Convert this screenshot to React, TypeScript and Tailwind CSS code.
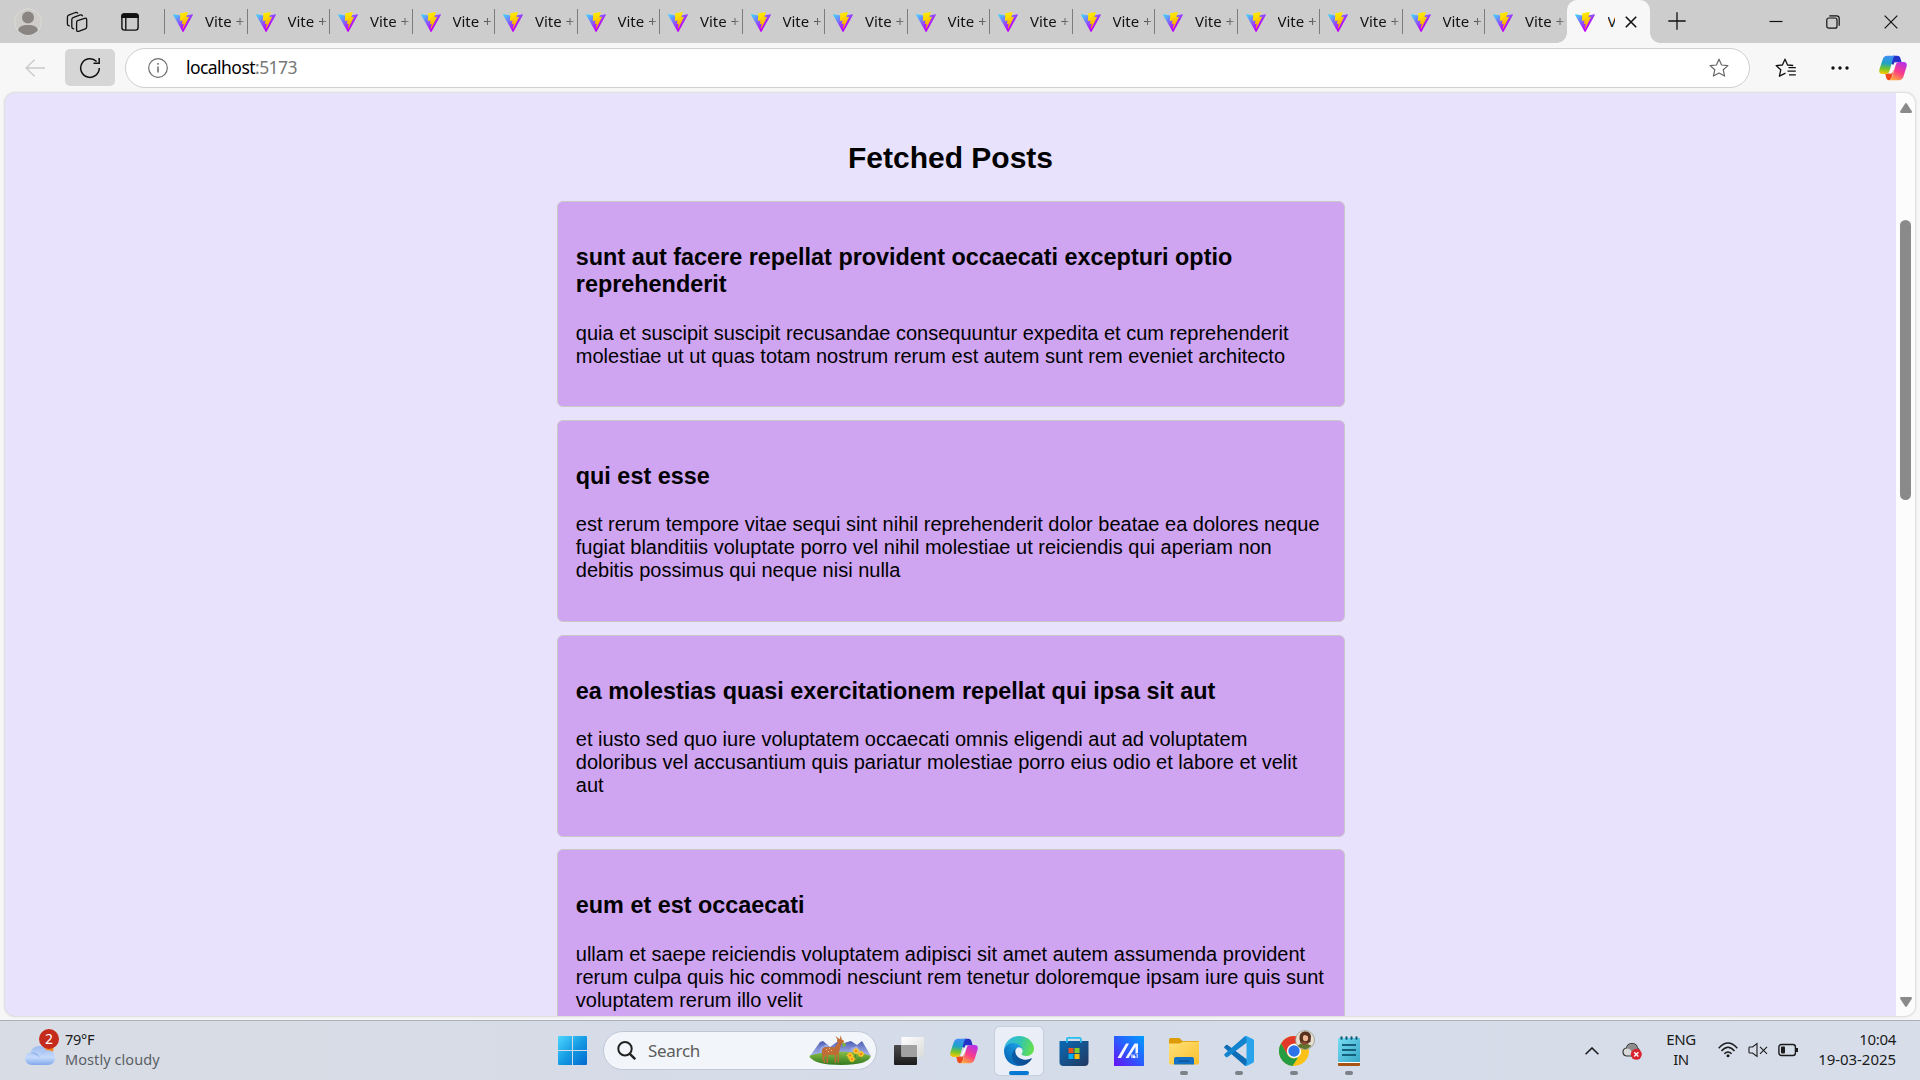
import React from "react";

const posts = [
  {
    title: "sunt aut facere repellat provident occaecati excepturi optio reprehenderit",
    body: "quia et suscipit suscipit recusandae consequuntur expedita et cum reprehenderit molestiae ut ut quas totam nostrum rerum est autem sunt rem eveniet architecto",
  },
  {
    title: "qui est esse",
    body: "est rerum tempore vitae sequi sint nihil reprehenderit dolor beatae ea dolores neque fugiat blanditiis voluptate porro vel nihil molestiae ut reiciendis qui aperiam non debitis possimus qui neque nisi nulla",
  },
  {
    title: "ea molestias quasi exercitationem repellat qui ipsa sit aut",
    body: "et iusto sed quo iure voluptatem occaecati omnis eligendi aut ad voluptatem doloribus vel accusantium quis pariatur molestiae porro eius odio et labore et velit aut",
  },
  {
    title: "eum et est occaecati",
    body: "ullam et saepe reiciendis voluptatem adipisci sit amet autem assumenda provident rerum culpa quis hic commodi nesciunt rem tenetur doloremque ipsam iure quis sunt voluptatem rerum illo velit",
  },
];

function SharedGradients() {
  return (
    <svg className="absolute size-0" aria-hidden="true">
      <defs>
        <linearGradient id="viteA" x1="0" y1="0.1" x2="0.6" y2="0.75">
          <stop offset="0" stopColor="#41d1ff" />
          <stop offset="1" stopColor="#bd00fe" />
        </linearGradient>
        <linearGradient id="viteB" x1="0.4" y1="0" x2="0.6" y2="0.9">
          <stop offset="0" stopColor="#ffea00" />
          <stop offset="0.3" stopColor="#ffdd00" />
          <stop offset="1" stopColor="#f5a300" />
        </linearGradient>
        <linearGradient id="copA" x1="0.3" y1="0" x2="0.2" y2="1">
          <stop offset="0" stopColor="#3f8ff5" />
          <stop offset="0.4" stopColor="#1fa3c4" />
          <stop offset="0.7" stopColor="#74c52c" />
          <stop offset="1" stopColor="#ffc800" />
        </linearGradient>
        <linearGradient id="copB" x1="0.8" y1="0" x2="0.3" y2="1">
          <stop offset="0" stopColor="#b431ec" />
          <stop offset="0.55" stopColor="#fb3c88" />
          <stop offset="1" stopColor="#ffa83c" />
        </linearGradient>
      </defs>
    </svg>
  );
}

function ViteLogo() {
  return (
    <svg viewBox="0 0 256 257" className="size-5 shrink-0">
      <path fill="url(#viteA)" d="M255.153 37.938L134.897 252.976c-2.483 4.44-8.862 4.466-11.382.048L.875 37.958c-2.746-4.814 1.371-10.646 6.827-9.67l120.385 21.517a6.537 6.537 0 0 0 2.322-.004l117.867-21.483c5.438-.991 9.574 4.796 6.877 9.62Z" />
      <path fill="url(#viteB)" d="M185.432.063L96.44 17.501a3.268 3.268 0 0 0-2.634 3.014l-5.474 92.456a3.268 3.268 0 0 0 3.997 3.378l24.777-5.718c2.318-.535 4.413 1.507 3.936 3.838l-7.361 36.047c-.495 2.426 1.782 4.5 4.151 3.78l15.304-4.649c2.372-.72 4.652 1.36 4.15 3.788l-11.698 56.621c-.732 3.542 3.979 5.473 5.943 2.437l1.313-2.028l72.516-144.72c1.215-2.423-.88-5.186-3.54-4.672l-25.505 4.922c-2.396.462-4.435-1.77-3.759-4.114l16.646-57.705c.677-2.35-1.37-4.583-3.769-4.113Z" />
    </svg>
  );
}

function Copilot() {
  return (
    <svg viewBox="0 0 28 26" className="h-[26px] w-7">
      <path fill="#2432c8" d="M14 .8h4.4c1.7 0 2.6.9 3.1 2.6l1.1 3.8h-4.2c-2 0-3 1-3.5 2.7l-3-1.2z" />
      <path fill="#f04a1c" d="M6.2 18.5h5.6l3-3.5-2.2 7.7c-.5 1.6-1.4 2.5-2.8 2.5-1.3 0-2-.8-2.5-2.2z" />
      <path fill="url(#copA)" d="M8.2.8h8.6c-1.6.3-2.3 1.4-2.8 3l-3.4 11.7c-.7 2.2-1.7 3.4-4 3.4H3.2c-2.5 0-3.5-1.8-2.8-4.4L3.7 4.2C4.4 2 5.9.8 8.2.8z" />
      <path fill="url(#copB)" d="M19.8 25.2H9.6c1.8 0 2.8-1 3.4-2.8l3.6-12.2c.6-2 1.7-3.2 4-3.2h4c2.7 0 3.8 1.8 3 4.5l-3.2 10.3c-.8 2.3-2.3 3.4-4.6 3.4z" />
      <path fill="#fff" opacity=".85" d="M15.5 7.3h2.2c-1 .6-1.4 1.4-1.8 2.7l-2.7 8.600h-2.4z" />
    </svg>
  );
}

function TabBar() {
  return (
    <div className="flex h-[43px] shrink-0 bg-[#cdcdcd] text-[#111]">
      <div className="flex w-[164px] shrink-0 items-center">
        <svg viewBox="0 0 28 28" className="ml-3.5 size-7">
          <circle cx="14" cy="14" r="13.2" fill="#cfcdca" stroke="#dedad5" />
          <circle cx="14" cy="9.6" r="6" fill="#8a8583" />
          <path fill="#8a8583" d="M4 22.300C5 18.500 8 17 14 17s9 1.500 10 5.300A13 13 0 0 1 14 27 13 13 0 0 1 4 22.300z" />
        </svg>
        <svg viewBox="0 0 22 22" className="ml-6 size-[22px]" fill="none" stroke="#111" strokeWidth="1.3" strokeLinejoin="round" strokeLinecap="round">
          <path d="M11.500 9.600l7.200-2.300q2-.5 2 1.400v7.100q0 1.500-1.400 2l-6.700 2.500q-2 .6-2-1.400v-7.200q0-1.600.9-2.100z" />
          <path d="M7.700 17.800q-1.900-.1-1.900-1.800V8.700q0-1.600 1.300-2.100l7.200-2.700q1.500-.4 2.100.9" />
          <path d="M3.300 14.900q-1.900-.2-1.900-1.900V6.100q0-1.500 1.300-2l6.700-2.600q1.500-.4 2.300.6" />
        </svg>
        <svg viewBox="0 0 20 20" className="ml-8 size-5" fill="none" stroke="#111" strokeWidth="1.400">
          <rect x="1.900" y="1.900" width="16.200" height="16.200" rx="2.600" />
          <path d="M5.800 6v12" />
          <path fill="#111" stroke="none" d="M1.200 6V4.200a3 3 0 0 1 3-3h11.600a3 3 0 0 1 3 3V6z" />
        </svg>
      </div>
      {Array.from({ length: 17 }, (_, i) => (
        <div key={i} className="flex w-[82.5px] shrink-0 items-center">
          <div className="h-[25px] w-px shrink-0 bg-[#7c7c7c]" />
          <div className="ml-2 flex"><ViteLogo /></div>
          <span className="-mt-0.5 ml-3 w-10 shrink-0 whitespace-nowrap bg-gradient-to-r from-[#111] from-60% to-[#999] bg-clip-text text-[15px] leading-5 text-transparent">Vite +</span>
        </div>
      ))}
      <div className="relative flex w-[83px] shrink-0 items-center rounded-t-[10px] bg-[#f7f7f7]">
        <div className="absolute -left-2.5 bottom-0 size-2.5 bg-[radial-gradient(circle_at_0_0,#cdcdcd_9.5px,#f7f7f7_10px)]" />
        <div className="absolute -right-2.5 bottom-0 size-2.5 bg-[radial-gradient(circle_at_100%_0,#cdcdcd_9.5px,#f7f7f7_10px)]" />
        <div className="ml-2 flex"><ViteLogo /></div>
        <span className="-mt-0.5 ml-[13px] w-[7px] overflow-hidden text-[15px] leading-5">V</span>
        <svg viewBox="0 0 12 12" className="ml-2.5 size-3" stroke="#111" strokeWidth="1.600"><path d="M.8.8l10.400 10.400M11.200.8L.8 11.200" /></svg>
      </div>
      <svg viewBox="0 0 18 18" className="ml-[18px] mt-3 size-[18px]" stroke="#111" strokeWidth="1.300"><path d="M9 .3v17.400M.3 9h17.400" /></svg>
      <div className="ml-auto flex items-center pr-[22px]">
        <svg viewBox="0 0 14 14" className="mr-[43px] size-3.5" stroke="#111" strokeWidth="1.200"><path d="M.5 6.500h13" /></svg>
        <svg viewBox="0 0 14 14" className="mr-11 size-3.5" fill="none" stroke="#111" strokeWidth="1.200">
          <rect x=".8" y="3" width="10.200" height="10.200" rx="2" />
          <path d="M3.300.8h7.300c1.500 0 2.600 1.100 2.600 2.600v7.300" />
        </svg>
        <svg viewBox="0 0 14 14" className="size-3.5" stroke="#111" strokeWidth="1.200"><path d="M.7.7l12.600 12.600M13.300.7L.7 13.300" /></svg>
      </div>
    </div>
  );
}

const star = "M10 1.200l2.600 5.800 6.300.6-4.700 4.200 1.400 6.300L10 15l-5.600 3.100 1.400-6.300L1.100 7.600l6.300-.6z";

function Toolbar() {
  return (
    <div className="flex h-[49px] shrink-0 items-center">
      <svg viewBox="0 0 20 18" className="ml-[25px] h-[18px] w-5" fill="none" stroke="#c9c9c9" strokeWidth="1.300"><path d="M20 9H1M9.600.8L1 9l8.600 8.200" /></svg>
      <div className="ml-5 flex h-[37px] w-[50px] items-center justify-center rounded-[5px] bg-[#d6d6d6]">
        <svg viewBox="0 0 22 22" className="size-[22px]" fill="none" stroke="#111" strokeWidth="1.500"><path d="M20.300 11A9.300 9.300 0 1 1 17.600 4.500M20.200 1v5.300h-5.700" /></svg>
      </div>
      <div className="ml-2.5 flex h-10 w-[1625px] items-center rounded-full border border-[#cfcfcf] bg-white pl-[22px] pr-5">
        <svg viewBox="0 0 20 20" className="size-5" fill="none" stroke="#6b6b6b" strokeWidth="1.200">
          <circle cx="10" cy="10" r="9.300" />
          <path d="M10 8.500v6M10 5v1.700" strokeWidth="1.500" />
        </svg>
        <span className="-mt-px ml-[18px] text-[17.500px] leading-6 tracking-[-0.55px] text-black">localhost<span className="text-[#777]">:5173</span></span>
        <svg viewBox="0 0 20 20" className="ml-auto size-5" fill="none" stroke="#666" strokeWidth="1.200" strokeLinejoin="round"><path d={star} /></svg>
      </div>
      <svg viewBox="0 0 22 20" className="ml-[25px] h-5 w-[22px]" fill="none" stroke="#111" strokeWidth="1.300" strokeLinejoin="round">
        <path d="M10.500 15.200l-6.100 3 1.400-6.400L1.100 7.600l6.300-.6L10 1.200l2.600 5.800 5.600.5M13.500 9.600h7.300M12.500 13.200h8.300M14 16.800h6.800" />
      </svg>
      <svg viewBox="0 0 18 4" className="ml-[34px] h-1 w-[18px]" fill="#111"><circle cx="2" cy="2" r="1.700" /><circle cx="9" cy="2" r="1.700" /><circle cx="16" cy="2" r="1.700" /></svg>
      <div className="ml-[30px]"><Copilot /></div>
    </div>
  );
}

function Page() {
  return (
    <div className="mx-[5px] mt-px flex h-[923px] shrink-0 overflow-hidden rounded-[10px] bg-[#e8e2fd] shadow-[0_0_2px_1px_rgba(0,0,0,0.12)]">
      <main className="flex flex-1 flex-col items-center font-['Liberation_Sans',Arial,sans-serif] text-black">
        <h1 className="mt-[47px] text-[30px] font-bold leading-[35px]">Fetched Posts</h1>
        <div className="mt-[26px] flex w-[788px] flex-col gap-[12.500px]">
          {posts.map((p) => (
            <article key={p.title} className="rounded-[6px] border border-[#c8c8c8] bg-[#cfa5f2] px-[18.300px] py-[18.750px]">
              <h3 className="my-[23.400px] text-[23.400px] font-bold leading-[27px]">{p.title}</h3>
              <p className="mb-5 text-[20px] leading-[23px]">{p.body}</p>
            </article>
          ))}
        </div>
      </main>
      <div className="flex w-[19px] flex-col items-center bg-[#fcfcfc]">
        <svg viewBox="0 0 12 10" className="mt-2.5 h-2.5 w-3 shrink-0" fill="#8a8a8a"><path d="M5 .7Q6-.5 7 .7l4.700 7.300q.8 2-1 2H1.300q-1.800 0-1-2z" /></svg>
        <div className="mt-[107px] h-[280px] w-[11px] shrink-0 rounded-full bg-[#8a8a8a]" />
        <svg viewBox="0 0 12 10" className="mb-[9px] mt-auto h-2.5 w-3 shrink-0 rotate-180" fill="#8a8a8a"><path d="M5 .7Q6-.5 7 .7l4.700 7.300q.8 2-1 2H1.300q-1.800 0-1-2z" /></svg>
      </div>
    </div>
  );
}

function WindowsLogo() {
  return (
    <svg viewBox="0 0 29 29" className="size-[29px]">
      <defs>
        <linearGradient id="win" x1="0" y1="0" x2="1" y2="1"><stop offset="0" stopColor="#4fd6ff" /><stop offset=".5" stopColor="#159be3" /><stop offset="1" stopColor="#0069d0" /></linearGradient>
      </defs>
      <path fill="url(#win)" d="M1 0h13v14H0V1q0-1 1-1zM15 0h13q1 0 1 1v13H15zM0 15h14v14H1q-1 0-1-1zM15 15h14v13q0 1-1 1H15z" />
    </svg>
  );
}

function DeerScene() {
  return (
    <svg viewBox="0 0 62 31" className="h-[31px] w-[62px]">
      <defs>
        <linearGradient id="mtn" x1="0" y1="0" x2="0" y2="1"><stop offset="0" stopColor="#4e5cb4" /><stop offset="1" stopColor="#aebcf0" /></linearGradient>
        <linearGradient id="grass" x1="0" y1="0" x2="0" y2="1"><stop offset="0" stopColor="#87bd45" /><stop offset="1" stopColor="#32791f" /></linearGradient>
      </defs>
      <path fill="url(#mtn)" d="M1 21L11 7l3-1 7 6 7-5 7 1 7-2 6 4 5-4 9 15z" />
      <path fill="#98a8e6" d="M12 12l6-3 6 9H9zM42 13l6-2 5 7-12 1z" />
      <ellipse cx="31" cy="22" rx="30.500" ry="4.500" fill="#8fbd4c" />
      <path fill="url(#grass)" d="M.5 21c12-5 47-6 61 0 0 5-10 9-29 9S3 27 .5 21z" />
      <g fill="#c06c35">
        <path d="M13 15q1-3 4-3l9 .3 3.200-5.300 3.300 1-2.500 9q-1 3-5 3l-8-.2-2.500 1.200-1.500-2z" />
        <ellipse cx="31.500" cy="6.300" rx="3.600" ry="2.200" transform="rotate(18 31.500 6.300)" />
        <path d="M28.800 5L26.300 1l3.500 2.600zM31 4l.6-3.800 1.300 4z" />
        <path d="M14 18l3 2-2 3 1.500 5H15l-2-5zM17.500 19.500h2l-.7 8.500h-1.400zM25.500 19l1.800-1-.2 10h-1.400zM28.300 18l1.400-1 .4 10.500h-1.500z" />
      </g>
      <path fill="#f0c69b" d="M17 14h1v1h-1zM20 13h1v1h-1zM22 15h1v1h-1zM19 16h1v1h-1zM33.500 7l3 1-2 1z" />
      <path fill="#79b53c" d="M33 9q2-2 3.500 0t-2.500 3z" />
      <path stroke="#3f8a25" d="M41 22l1 6M47 18l-2 9M52 21l-4 6" fill="none" />
      {[[41, 20.5], [47, 16], [52, 19], [43, 24]].map(([x, y]) => (
        <g key={x} fill="#ffc329" transform={`translate(${x} ${y})`}>
          <ellipse rx="3.600" ry="1" /><ellipse rx="1" ry="3.600" /><ellipse rx=".9" ry="3.300" transform="rotate(45)" /><ellipse rx=".9" ry="3.300" transform="rotate(-45)" />
          <circle r="1.100" fill="#e57e10" />
        </g>
      ))}
    </svg>
  );
}

function TaskView() {
  return (
    <svg viewBox="0 0 30 30" className="size-[30px]">
      <defs>
        <linearGradient id="tvD" x1="0" y1="0" x2="0" y2="1"><stop offset="0" stopColor="#4b4b4b" /><stop offset="1" stopColor="#1c1c1c" /></linearGradient>
        <linearGradient id="tvL" x1="0" y1="0" x2="1" y2="1"><stop offset="0" stopColor="#fff" /><stop offset="1" stopColor="#dadada" /></linearGradient>
      </defs>
      <rect x="0" y="9" width="23" height="20" rx="1" fill="url(#tvD)" />
      <rect x="7.500" y="1" width="22.500" height="20" rx="1" fill="url(#tvL)" />
      <path fill="#a1a1a1" d="M7.500 9H22q1 0 1 1v11H8.500q-1 0-1-1z" />
    </svg>
  );
}

function EdgeLogo() {
  return (
    <svg viewBox="0 0 256 256" className="size-[30px]">
      <defs>
        <linearGradient id="edA" x1="0.2" y1="0.6" x2="1" y2="0.7"><stop offset="0" stopColor="#0c59a4" /><stop offset="1" stopColor="#114a8b" /></linearGradient>
        <linearGradient id="edB" x1="0.8" y1="0.2" x2="0.3" y2="0.9"><stop offset="0" stopColor="#1b9de2" /><stop offset="1" stopColor="#0667b8" /></linearGradient>
        <linearGradient id="edC" x1="0" y1="0.3" x2="1" y2="0.5"><stop offset="0" stopColor="#35b6e8" /><stop offset=".5" stopColor="#31c4b4" /><stop offset="1" stopColor="#66e04d" /></linearGradient>
      </defs>
      <path fill="url(#edA)" d="M231 190.500c-3.400 1.800-6.900 3.400-10.500 4.700a101.900 101.900 0 0 1-35.900 6.500c-47.300 0-88.500-32.500-88.500-74.300a31.500 31.500 0 0 1 16.400-27.300c-42.800 1.800-53.800 46.400-53.800 72.500 0 73.900 68.100 81.400 82.800 81.400 7.900 0 19.800-2.300 27-4.600l1.300-.4a128.300 128.300 0 0 0 66.600-52.800 4 4 0 0 0-5.400-5.700z" />
      <path fill="url(#edB)" d="M105.700 241.400a79.200 79.200 0 0 1-22.700-21.300 80.700 80.700 0 0 1 29.500-120c3.200-1.500 8.500-4.100 15.600-4a32.400 32.400 0 0 1 25.700 13 31.900 31.900 0 0 1 6.300 18.700c0-.2 24.500-79.600-80-79.600C36.200 48.200 0 89.900 0 126.400a130.200 130.200 0 0 0 12.100 56 128 128 0 0 0 156.400 67 75.500 75.500 0 0 1-62.800-8z" />
      <path fill="url(#edC)" d="M152.300 148.900c-.8 1-3.300 2.500-3.300 5.700 0 2.600 1.700 5.100 4.700 7.200 14.400 10 41.500 8.700 41.600 8.700a59.600 59.600 0 0 0 30.300-8.300A61.400 61.400 0 0 0 256 109.200c.3-22.400-8-37.300-11.300-43.900C223.500 23.900 177.700 0 128 0A128 128 0 0 0 0 126.200c.5-36.500 36.800-66 80-66 3.500 0 23.500.3 42 10 16.300 8.600 24.900 18.900 30.800 29.200 6.200 10.700 7.300 24.100 7.300 29.500 0 5.300-2.700 13.300-7.800 20z" />
    </svg>
  );
}

function StoreLogo() {
  return (
    <svg viewBox="0 0 30 30" className="size-[30px]">
      <defs><linearGradient id="store" x1="0" y1="0" x2="1" y2="1"><stop offset="0" stopColor="#0869b5" /><stop offset="1" stopColor="#233960" /></linearGradient></defs>
      <path fill="url(#store)" d="M1 5h28q.5 0 .5.5V26q0 4-4 4h-21q-4 0-4-4V5.500Q.5 5 1 5z" />
      <path fill="none" stroke="#27bdec" strokeWidth="1.800" d="M7.900 6.800V3q0-1.200 1.200-1.200h11.500Q21.800 1.800 21.800 3v3.800" />
      <path fill="#f1511b" d="M9.500 12h5v5h-5z" /><path fill="#80cc28" d="M15.500 12h5v5h-5z" />
      <path fill="#00adef" d="M9.500 18h5v5h-5z" /><path fill="#fbbc09" d="M15.500 18h5v5h-5z" />
    </svg>
  );
}

function AsusLogo() {
  return (
    <svg viewBox="0 0 30 30" className="size-[30px]">
      <defs><linearGradient id="asus" x1="1" y1="0" x2="0" y2="1"><stop offset="0" stopColor="#009dff" /><stop offset=".5" stopColor="#2a5cff" /><stop offset="1" stopColor="#6a10f5" /></linearGradient></defs>
      <path fill="url(#asus)" d="M0 0h30v30H0z" />
      <path fill="#f4f5ff" d="M3.500 22l8.500-14.500h3L7 22zM11.500 22L20.500 7.500H24V17l-2.500 1V11l-7 11z" />
      <path fill="#c9d4ff" d="M17 18.500h4V22h-4z" opacity=".8" />
      <circle cx="20.300" cy="21" r="1.300" fill="#fff" />
      <path fill="#bcc8ff" d="M22.500 18H24v4h-1.500z" />
    </svg>
  );
}

function FolderLogo() {
  return (
    <svg viewBox="0 0 30 30" className="size-[30px]">
      <defs><linearGradient id="fold" x1="0" y1="0" x2="1" y2="1"><stop offset="0" stopColor="#ffe17a" /><stop offset="1" stopColor="#fbc02c" /></linearGradient></defs>
      <path fill="#dd9b06" d="M1.500 2h8q1 0 1.700.7L13.500 5H29q1 0 1 1v3H0V3.500Q0 2 1.500 2z" />
      <path fill="url(#fold)" d="M0 7.500h11l2.500-1.800H30V27q0 1.500-1.500 1.500h-27Q0 28.500 0 27z" />
      <path fill="#1271c4" d="M5 28.500V23q0-2 2-2h16q2 0 2 2v5.500z" />
      <path fill="#0a4f93" d="M10 24.500h10v1.300H10z" />
    </svg>
  );
}

function CodeLogo() {
  return (
    <svg viewBox="0 0 30 30" className="size-[30px]">
      <path fill="#0d6cb5" d="M.5 10.500L2 9q.8-.6 1.600 0L23 23.500V30q-2 0-3-1L.5 12q-.6-.800 0-1.500z" />
      <path fill="#1284cf" d="M.5 19.500L2 21q.8.6 1.600 0L23 6.500V0q-2 0-3 1L.5 18q-.6.8 0 1.500z" />
      <path fill="#29a4ec" d="M22.500.1L28.700 3Q30 3.600 30 5v20q0 1.400-1.300 2l-6.200 2.900q-1.600.5-2.500-.9 2.500.500 2.500-1.800V2.800Q22.500.5 20 1q.9-1.400 2.500-.9z" />
    </svg>
  );
}

function ChromeLogo() {
  return (
    <svg viewBox="0 0 36 36" className="-mt-1.5 ml-1.5 size-9">
      <g transform="translate(0 6)">
        <circle cx="15" cy="15" r="15" fill="#fbc116" />
        <path fill="#e3392b" d="M2 7.500A15 15 0 0 1 28 7.500H15L8.500 18.700z" />
        <path fill="#259b42" d="M2 7.500l6.500 11.250A7.500 7.500 0 0 0 15 22.500l4-1L13.500 30A15 15 0 0 1 2 7.500z" />
        <circle cx="15" cy="15" r="7.200" fill="#fff" />
        <circle cx="15" cy="15" r="5.700" fill="#2d73e8" />
      </g>
      <circle cx="26" cy="10" r="9.500" fill="#e8dfcf" stroke="#8c918c" strokeWidth=".7" />
      <path fill="#57301f" d="M20.500 9q-.5-7 5-7.500T32 6l-.5 6-5 2-5-1z" />
      <ellipse cx="26.500" cy="8" rx="2.600" ry="3.300" fill="#efb695" />
      <path fill="#60752f" d="M18.500 16q4-4 7-3t7 2.500q-6 7-14 .5z" />
      <path fill="#8f4b32" d="M22 11.500l5 .5 3 2-6 1z" />
      <path fill="#57301f" d="M23 5.500q3-1.500 6.500 1L29.200 3 25 2z" />
    </svg>
  );
}

function NotepadLogo() {
  return (
    <svg viewBox="0 0 30 30" className="size-[30px]">
      <defs><linearGradient id="note" x1="0" y1="0" x2="1" y2="1"><stop offset="0" stopColor="#76dcf2" /><stop offset="1" stopColor="#37a6c6" /></linearGradient></defs>
      <path fill="#a65314" d="M4 26h22v3q0 1-1 1H5q-1 0-1-1z" />
      <path fill="#fff" d="M4 24h22v3H4z" />
      <path fill="url(#note)" d="M5 2h20q1 0 1 1v23H4V3q0-1 1-1z" />
      <path stroke="#14607c" strokeWidth="1.800" fill="none" d="M8 9h14M8 14h14M8 19h14" />
      <path stroke="#14607c" strokeWidth="2.200" strokeLinecap="round" d="M7.500 1.300v1.500M12.500 1.300v1.500M17.500 1.300v1.500M22.500 1.300v1.500" />
    </svg>
  );
}

const apps = [
  { name: "Task view", icon: <TaskView />, state: "" },
  { name: "Copilot", icon: <Copilot />, state: "" },
  { name: "Edge", icon: <EdgeLogo />, state: "active" },
  { name: "Store", icon: <StoreLogo />, state: "" },
  { name: "MyASUS", icon: <AsusLogo />, state: "" },
  { name: "Explorer", icon: <FolderLogo />, state: "open" },
  { name: "Code", icon: <CodeLogo />, state: "open" },
  { name: "Chrome", icon: <ChromeLogo />, state: "open" },
  { name: "Notepad", icon: <NotepadLogo />, state: "open" },
];

function Taskbar() {
  return (
    <div className="flex h-[60px] w-full shrink-0 items-center border-t border-[#abb0b8] bg-gradient-to-r from-[#d8dce4] via-[#d5dce9] to-[#d7deea] text-[#1b1b1b]">
      <div className="flex w-[558px] shrink-0 items-center">
        <div className="relative ml-[25px] h-9 w-[34px] shrink-0">
          <svg viewBox="0 0 34 36" className="-mt-1 h-9 w-[34px]">
            <defs><linearGradient id="cloud" x1="0" y1="0" x2="0" y2="1"><stop offset="0" stopColor="#9dbbef" /><stop offset=".6" stopColor="#c6dafb" /><stop offset="1" stopColor="#81a8ec" /></linearGradient></defs>
            <circle cx="23.500" cy="20" r="5" fill="#f5821f" />
            <path fill="url(#cloud)" d="M7 36q-6.500 0-7-6.500.3-5 5.500-6Q7.500 17 14 17q5 0 7.500 4.300 8-1.300 8.500 7.200Q30 36 22.500 36z" />
            <path fill="#7fa4e8" opacity=".6" d="M5 24q7-2 10 5-4-4-10-5zM21.500 21.500q-4 .5-6 5 3-4 6-5z" />
          </svg>
          <span className="absolute left-3.5 -top-1 flex size-5 items-center justify-center rounded-full bg-[#c42b1c] text-[14px] leading-none text-white">2</span>
        </div>
        <div className="-mt-[3px] ml-1.5 text-[14.500px] leading-5">
          <div className="tracking-[-0.3px]">79°F</div>
          <div className="tracking-[0.07px] text-[#5b5f66]">Mostly cloudy</div>
        </div>
      </div>
      <WindowsLogo />
      <div className="ml-4 flex h-[39px] w-[274px] shrink-0 items-center rounded-full border border-[#bfc7d6] bg-[#f2f5f9] pl-[13px] pr-[5px]">
        <svg viewBox="0 0 19 19" className="size-[19px]" fill="none" stroke="#222" strokeWidth="2"><circle cx="8" cy="7.700" r="6.700" /><path d="M12.600 12.600l5.600 5.600" strokeWidth="2.400" /></svg>
        <span className="ml-3 text-[17px] leading-6 tracking-[-0.3px] text-[#5c5c5c]">Search</span>
        <div className="ml-auto"><DeerScene /></div>
      </div>
      <div className="ml-[4.500px] flex">
        {apps.map((a) => (
          <div key={a.name} className="flex w-[55px] justify-center">
            <div className={a.state === "active" ? "relative flex size-12 items-center justify-center rounded-[5px] bg-[#eaeef7] shadow-[0_0_1px_1px_rgba(120,130,150,0.15)]" : "relative flex size-12 items-center justify-center"}>
              {a.icon}
              {a.state === "active" && <span className="absolute bottom-0 left-3.5 h-1 w-5 rounded-full bg-[#0078d4]" />}
              {a.state === "open" && <span className="absolute bottom-0 left-5 h-1 w-2 rounded-full bg-[#7d8188]" />}
            </div>
          </div>
        ))}
      </div>
      <div className="ml-auto flex shrink-0 items-center pr-6 text-[15px] leading-5">
        <svg viewBox="0 0 14 8" className="mr-[23px] h-2 w-3.5" fill="none" stroke="#1b1b1b" strokeWidth="1.600"><path d="M.6 7.200L7 1l6.400 6.200" /></svg>
        <svg viewBox="0 0 20 18" className="mr-6 h-[18px] w-5">
          <path fill="#d9d9d9" stroke="#333" strokeWidth="1.200" d="M4.500 14Q1 13.500 1 10t3.500-4Q5.500 1.500 10 1.500T15.500 6q2 1 2 4t-4 4z" />
          <path fill="#8c8c8c" d="M4.500 6.200Q6 2 10 2t5 4.500l2 3-7 1.500Q9 6.500 4.500 6.200z" />
          <circle cx="14.300" cy="12.300" r="5.500" fill="#d9232e" />
          <path stroke="#fff" strokeWidth="1.400" d="M12.200 10.200l4.200 4.200M16.400 10.200l-4.200 4.200" />
        </svg>
        <div className="-mt-[3px] mr-[22px] w-[30px] text-center tracking-[-0.4px]"><div>ENG</div><div>IN</div></div>
        <svg viewBox="0 0 20 16" className="-mt-0.5 mr-2.5 h-4 w-5" fill="none" stroke="#1b1b1b" strokeWidth="1.400">
          <path d="M.7 6.200Q10-4.200 19.300 6.200M3.500 9Q10 1.500 16.500 9M6.300 11.800q3.700-3.600 7.400 0" /><circle cx="10" cy="13.700" r="1.500" fill="#1b1b1b" stroke="none" />
        </svg>
        <svg viewBox="0 0 20 16" className="-mt-0.5 mr-2.5 h-4 w-5" fill="none" stroke="#1b1b1b" strokeWidth="1.100">
          <path d="M9 1.500v13L4.500 11H1.800q-.8 0-.8-.8V5.800Q1 5 1.800 5h2.700z" /><path d="M12 4.800l7 7M19 4.800l-7 7" />
        </svg>
        <svg viewBox="0 0 21 14" className="-mt-0.5 mr-[19px] h-3.5 w-[21px]" fill="none" stroke="#1b1b1b" strokeWidth="1.400">
          <rect x=".9" y="1.500" width="16.500" height="11" rx="2.500" /><rect x="3" y="3.600" width="4" height="6.800" rx=".8" fill="#1b1b1b" stroke="none" /><path d="M19 5v4" strokeWidth="2" />
        </svg>
        <div className="-mt-1 w-[78px] whitespace-nowrap text-right text-[15px]"><div className="tracking-[-0.3px]">10:04</div><div className="tracking-[-0.05px]">19-03-2025</div></div>
      </div>
    </div>
  );
}

export default function App() {
  return (
    <div className="flex h-[1080px] w-[1920px] flex-col overflow-hidden bg-[#f7f7f7] font-['Noto_Sans','Open_Sans',sans-serif]">
      <SharedGradients />
      <TabBar />
      <Toolbar />
      <Page />
      <div className="mt-auto flex"><Taskbar /></div>
    </div>
  );
}
